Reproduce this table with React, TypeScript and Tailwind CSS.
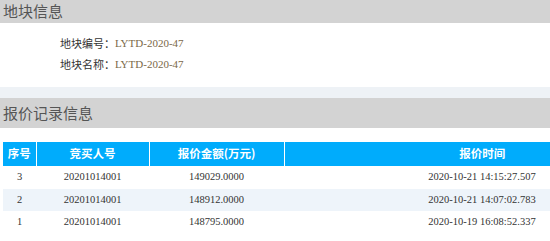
const rows = [
  { no: 3, bidder: '20201014001', amount: '149029.0000', time: '2020-10-21 14:15:27.507' },
  { no: 2, bidder: '20201014001', amount: '148912.0000', time: '2020-10-21 14:07:02.783' },
  { no: 1, bidder: '20201014001', amount: '148795.0000', time: '2020-10-19 16:08:52.337' },
];

const cjk = "font-['Microsoft_YaHei','Noto_Sans_CJK_SC',sans-serif]";
const serif = "font-['Liberation_Serif','Noto_Sans_CJK_SC',serif]";

function SectionTitle({ children, className }: { children: string; className: string }) {
  return (
    <div className={`flex items-center bg-[#d3d3d3] pl-[3px] text-[15px] text-[#555] ${cjk} ${className}`}>
      {children}
    </div>
  );
}

export default function App() {
  return (
    <div className="w-[550px] h-[241px] overflow-hidden bg-white">
      <SectionTitle className="h-[23px]">地块信息</SectionTitle>

      <div className="h-[64px] pt-[12px] pl-[60px] flex flex-col gap-[5px]">
        {[
          ['地块编号：', 'LYTD-2020-47'],
          ['地块名称：', 'LYTD-2020-47'],
        ].map(([label, value]) => (
          <div key={label} className="flex items-center h-[16px]">
            <span className={`w-[55px] text-[11px] text-[#333] ${cjk}`}>{label}</span>
            <span className={`text-[11px] text-[#7a6848] ${serif}`}>{value}</span>
          </div>
        ))}
      </div>

      <div className="h-[11px] bg-[#eef2f6]" />

      <SectionTitle className="h-[30px]">报价记录信息</SectionTitle>

      <div className="pt-[14px] pl-[3px]">
        <table className="w-[677px] border-collapse table-fixed">
          <thead>
            <tr className={`h-[24px] bg-[#00acfc] text-white text-[11.5px] font-bold ${cjk}`}>
              <th className="w-[33px] border-r border-white font-bold">序号</th>
              <th className="w-[113px] border-r border-white font-bold">竞买人号</th>
              <th className="w-[135px] border-r border-white font-bold">报价金额(万元)</th>
              <th className="font-bold">报价时间</th>
            </tr>
          </thead>
          <tbody className={`text-[10.5px] text-[#333] ${serif}`}>
            {rows.map((r, i) => (
              <tr key={r.no} className={`h-[22.5px] ${i === 1 ? 'bg-[#eef4fa]' : ''}`}>
                <td className="text-center">{r.no}</td>
                <td className="text-center">{r.bidder}</td>
                <td className="text-center">{r.amount}</td>
                <td className="text-center">{r.time}</td>
              </tr>
            ))}
          </tbody>
        </table>
      </div>
    </div>
  );
}
